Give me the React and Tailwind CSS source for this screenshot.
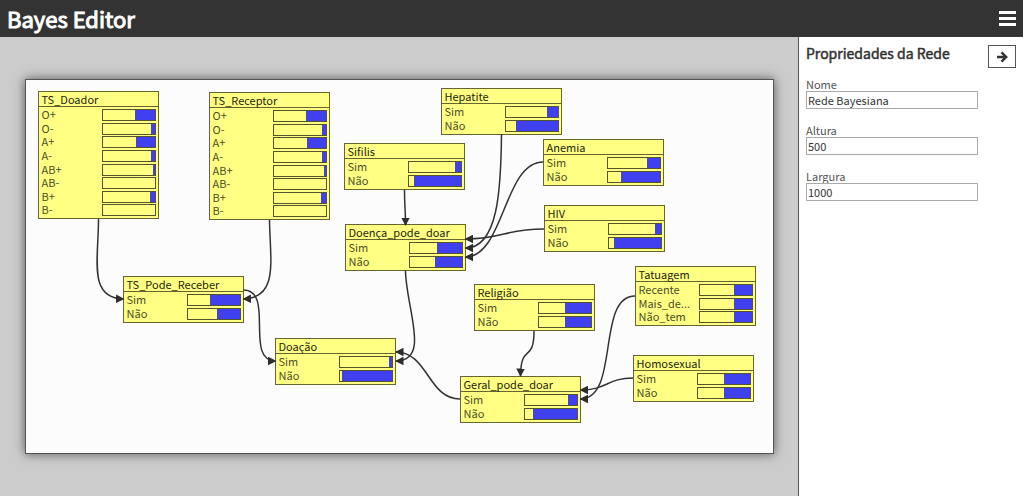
const NODES = [
  { name: "TS_Doador", place: "left-[12px] top-[11px] h-[128px]", states: [["O+", 37], ["O-", 7], ["A+", 36], ["A-", 6], ["AB+", 3], ["AB-", 0], ["B+", 9], ["B-", 0]] },
  { name: "TS_Receptor", place: "left-[183px] top-[12px] h-[128px]", states: [["O+", 37], ["O-", 7], ["A+", 36], ["A-", 6], ["AB+", 3], ["AB-", 0], ["B+", 9], ["B-", 0]] },
  { name: "Hepatite", place: "left-[415px] top-[8px] h-[47px]", states: [["Sim", 20], ["Não", 80]] },
  { name: "Sifilis", place: "left-[318px] top-[63px] h-[47px]", states: [["Sim", 10], ["Não", 90]] },
  { name: "Anemia", place: "left-[517px] top-[59px] h-[47px]", states: [["Sim", 25], ["Não", 75]] },
  { name: "HIV", place: "left-[518px] top-[125px] h-[47px]", states: [["Sim", 10], ["Não", 90]] },
  { name: "Doença_pode_doar", place: "left-[319px] top-[144px] h-[47px]", states: [["Sim", 48], ["Não", 51]] },
  { name: "TS_Pode_Receber", place: "left-[97px] top-[196px] h-[47px]", states: [["Sim", 57], ["Não", 43]] },
  { name: "Doação", place: "left-[249px] top-[258px] h-[47px]", states: [["Sim", 5], ["Não", 95]] },
  { name: "Religião", place: "left-[448px] top-[204px] h-[47px]", states: [["Sim", 50], ["Não", 50]] },
  { name: "Tatuagem", place: "left-[609px] top-[186px] h-[60px]", states: [["Recente", 33], ["Mais_de...", 33], ["Não_tem", 33]] },
  { name: "Geral_pode_doar", place: "left-[434px] top-[296px] h-[47px]", states: [["Sim", 16], ["Não", 84]] },
  { name: "Homosexual", place: "left-[607px] top-[275px] h-[47px]", states: [["Sim", 50], ["Não", 50]] },
];

const EDGES = [
  "M72.5 139 C72.5 180 62 218 97.5 219",
  "M243.5 140 C244 180 253 218 217.5 219",
  "M217.5 210 C249 210 218 281 249.5 281",
  "M378.5 110 C378.5 128 379.5 128 379.5 145",
  "M475.5 54 C475 110 472 168 439.5 168",
  "M517 82 C478 82 478 177 439.5 177",
  "M518 149 C478 149 478 159 439.5 159",
  "M379.5 191 C380 228 405 281 370 281",
  "M434 319 C402 319 402 272 370 272",
  "M508 251 C508 284 495 262 494.5 296",
  "M609 216 C570 216 594 319 554.5 319",
  "M607 298 C581 298 581 310 554.5 310",
];

const FIELDS = [
  { id: "nome", label: "Nome", value: "Rede Bayesiana" },
  { id: "altura", label: "Altura", value: "500" },
  { id: "largura", label: "Largura", value: "1000" },
];

function Node({ name, place, states }) {
  return (
    <section className={`absolute flex w-[121px] flex-col border border-[#66662f] bg-[#ffff84] ${place}`}>
      <h3 className="h-[15px] shrink-0 border-b border-[#66662f] pl-[3px] text-[11px] leading-[14px] text-[#26260f]">{name}</h3>
      <ul className="flex flex-1 flex-col pt-[2px] pl-[3px] pr-[2px]">
        {states.map(([label, value]) => (
          <li key={label} className="flex min-h-0 flex-1 items-start justify-between text-[11px] leading-[10px] text-[#4d4d28]">
            <span>{label}</span>
            <span className="flex h-[12px] w-[54px] justify-end border border-[#55552a]">
              <span className="h-full bg-[#4040ee]" style={{ width: `${value}%` }} />
            </span>
          </li>
        ))}
      </ul>
    </section>
  );
}

function Edges() {
  return (
    <svg className="pointer-events-none absolute inset-0 h-full w-full" fill="none" aria-hidden="true">
      <defs>
        <marker id="arrow" markerUnits="userSpaceOnUse" markerWidth="9" markerHeight="9" refX="7.5" refY="4.5" orient="auto">
          <path d="M0 0.2L8.5 4.5L0 8.8Z" fill="#2d2d2d" />
        </marker>
      </defs>
      {EDGES.map((d) => (
        <path key={d} d={d} stroke="#333" strokeWidth="1.5" markerEnd="url(#arrow)" />
      ))}
    </svg>
  );
}

export default function App() {
  return (
    <div className="flex min-h-screen flex-col bg-[#ccc] font-['Noto_Sans_CJK_JP',sans-serif] text-[#333]">
      <header className="flex h-[37px] shrink-0 items-center justify-between bg-[#333] pl-[7px] pr-[7px] text-white">
        <h1 className="pb-[2px] text-[22px] leading-[34px] [-webkit-text-stroke:1px]">Bayes Editor</h1>
        <button type="button" aria-label="Menu">
          <svg className="h-[15px] w-[17px]" viewBox="0 0 17 15" fill="currentColor">
            <path d="M0 0h17v3H0zM0 6h17v3H0zM0 12h17v3H0z" />
          </svg>
        </button>
      </header>
      <div className="flex flex-1">
        <main className="flex min-w-0 flex-1 items-center justify-center overflow-auto">
          <div className="relative h-[375px] w-[749px] shrink-0 border border-[#555] bg-[#fcfcfc] shadow-[0_0_10px_#555]">
            {NODES.map((node) => (
              <Node key={node.name} {...node} />
            ))}
            <Edges />
          </div>
        </main>
        <aside className="w-[225px] shrink-0 border-l border-[#555] bg-white pl-[7px] pr-[7px] pt-2">
          <div className="flex items-start justify-between">
            <h2 className="text-[14px] leading-[16px] [-webkit-text-stroke:0.5px]">Propriedades da Rede</h2>
            <button type="button" aria-label="Recolher painel" className="flex h-[23px] w-[28px] items-center justify-center border border-[#555]">
              <svg className="size-[12px]" viewBox="0 0 12 12" fill="none" stroke="currentColor" strokeWidth="2.4">
                <path d="M1 6h9M5.5 1.3L10.2 6L5.5 10.7" />
              </svg>
            </button>
          </div>
          <form className="mt-[9px] flex flex-col gap-[14px]">
            {FIELDS.map(({ id, label, value }) => (
              <div key={id} className="flex flex-col">
                <label htmlFor={id} className="text-[11px] leading-[14px] text-[#555]">{label}</label>
                <input id={id} defaultValue={value} className="h-[18px] w-[172px] border border-[#aaa] bg-white px-px text-[11px] leading-[16px] text-[#333]" />
              </div>
            ))}
          </form>
        </aside>
      </div>
    </div>
  );
}
